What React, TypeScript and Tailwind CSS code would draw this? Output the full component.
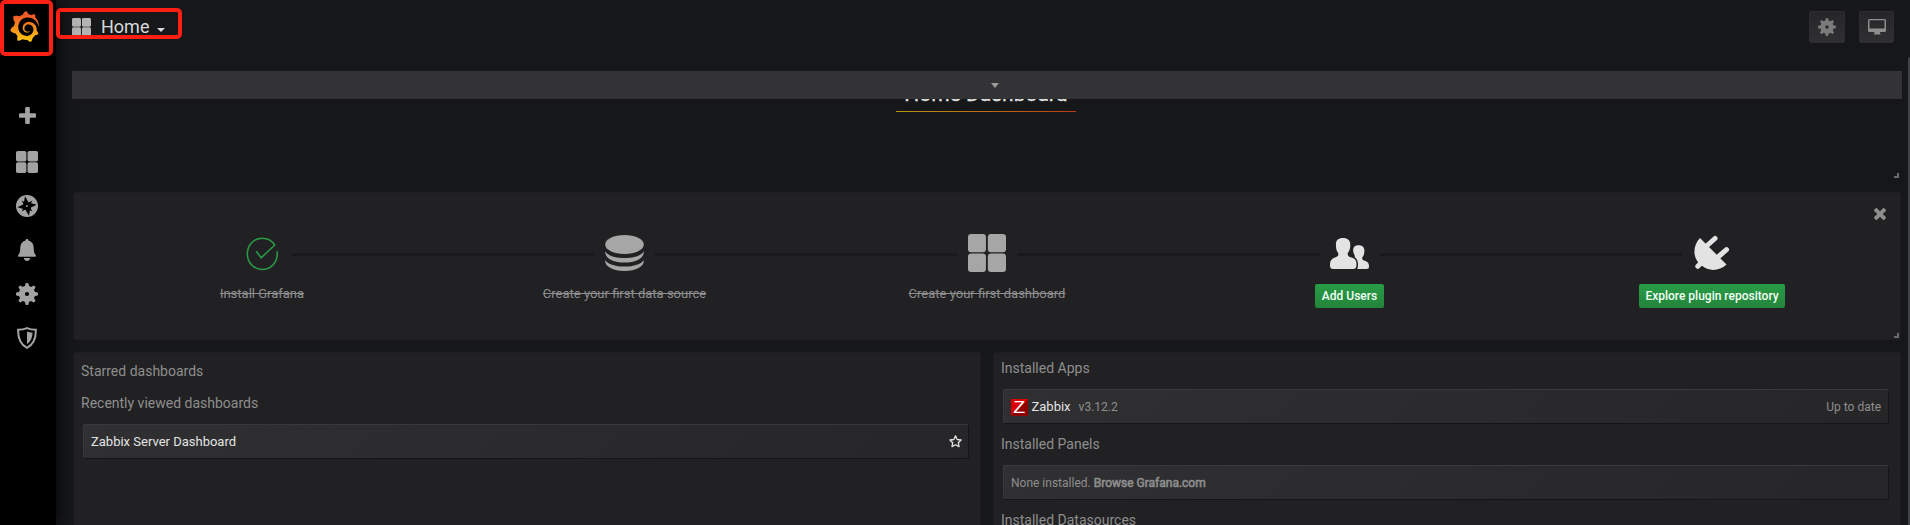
import type { ReactNode } from 'react';
import { SiGrafana } from 'react-icons/si';

type IconProps = { className?: string };

function GridIcon({ className }: IconProps) {
  return (
    <svg viewBox="0 0 36 38" preserveAspectRatio="none" className={className} fill="currentColor">
      <rect x="0" y="0" width="17" height="18.3" rx="3" />
      <rect x="18.8" y="0" width="17.2" height="18.3" rx="3" />
      <rect x="0" y="19.5" width="17" height="18.5" rx="3" />
      <rect x="18.8" y="19.5" width="17.2" height="18.5" rx="3" />
    </svg>
  );
}

function PlusIcon({ className }: IconProps) {
  return (
    <svg viewBox="192 128 1408 1408" className={className} fill="currentColor">
      <path d="M1600 736v192q0 40-28 68t-68 28h-416v416q0 40-28 68t-68 28h-192q-40 0-68-28t-28-68v-416h-416q-40 0-68-28t-28-68v-192q0-40 28-68t68-28h416v-416q0-40 28-68t68-28h192q40 0 68 28t28 68v416h416q40 0 68 28t28 68z" />
    </svg>
  );
}

function CloseIcon({ className }: IconProps) {
  return (
    <svg viewBox="302 366 1188 1188" className={className} fill="currentColor">
      <path d="M1490 1322q0 40-28 68l-136 136q-28 28-68 28t-68-28l-294-294-294 294q-28 28-68 28t-68-28l-136-136q-28-28-28-68t28-68l294-294-294-294q-28-28-28-68t28-68l136-136q28-28 68-28t68 28l294 294 294-294q28-28 68-28t68 28l136 136q28 28 28 68t-28 68l-294 294 294 294q28 28 28 68z" />
    </svg>
  );
}

function CompassIcon({ className }: IconProps) {
  return (
    <svg viewBox="0 0 22 22" className={className}>
      <circle cx="11" cy="11" r="11" fill="currentColor" />
      <path fill="#000" d="M9 1.2L12.600 7.600L20.600 9.800L14.400 12.800L13 20.800L9.200 14.500L1.400 12.200L7.600 9.200Z" />
      <path fill="#000" d="M5.600 5.600L11 8.500L16.400 5.600L13.500 11L16.400 16.400L11 13.500L5.600 16.400L8.500 11Z" />
      <circle cx="11" cy="11" r="0.900" fill="currentColor" />
    </svg>
  );
}

function BellIcon({ className }: IconProps) {
  return (
    <svg viewBox="0 0 18 22" className={className} fill="currentColor">
      <path d="M9 0c.9 0 1.400.6 1.500 1.400C13.800 2.200 15.600 5 15.700 8.400c.1 4.200.5 6 2 7.600.6.800.2 1.800-.8 1.800H1.100c-1 0-1.400-1-.8-1.800 1.500-1.600 1.900-3.400 2-7.600C2.400 5 4.200 2.200 7.500 1.400 7.600.6 8.100 0 9 0Z" />
      <path d="M5.800 19h6.400c-.3 1.800-1.500 2.900-3.200 2.900S6.100 20.800 5.800 19Z" />
    </svg>
  );
}

function GearIcon({ className }: IconProps) {
  return (
    <svg viewBox="0 0 22 22" className={className} fill="currentColor">
      {[0, 45, 90, 135].map((angle) => (
        <path
          key={angle}
          transform={`rotate(${angle} 11 11)`}
          d="M9.600.300Q11-.300 12.400.300L13.200 4H8.800ZM9.600 21.700Q11 22.300 12.400 21.700L13.200 18H8.800Z"
        />
      ))}
      <path fillRule="evenodd" d="M11 2.800a8.200 8.200 0 1 1 0 16.400a8.200 8.200 0 0 1 0-16.400ZM11 8.900a2.100 2.100 0 1 0 0 4.200a2.100 2.100 0 0 0 0-4.200Z" />
    </svg>
  );
}

function ShieldIcon({ className }: IconProps) {
  return (
    <svg viewBox="0 0 20 22" className={className}>
      <path
        d="M10 1.100C7.500 2.300 4.500 2.800 1.100 2.800C1 11 3.500 17.500 10 20.800C16.500 17.500 19 11 18.900 2.800C15.500 2.800 12.500 2.300 10 1.100Z"
        fill="none"
        stroke="currentColor"
        strokeWidth="2"
      />
      <path d="M10 4.500C11.700 5.200 13.500 5.700 15.600 5.800C15.400 10.800 13.600 14.800 10 17.200Z" fill="currentColor" />
    </svg>
  );
}

function MonitorIcon({ className }: IconProps) {
  return (
    <svg viewBox="0 0 18 16" className={className} fill="currentColor">
      <path
        fillRule="evenodd"
        d="M1.500 0h15q1.500 0 1.500 1.500v10q0 1.500-1.500 1.500H12v1q0 .5.6.7v.8H5.900v-.8q.5-.2.500-.7v-1H1.500Q0 13 0 11.500v-10Q0 0 1.500 0ZM1.500 1.200v8.300h15V1.200Z"
      />
    </svg>
  );
}

function CheckIcon({ className }: IconProps) {
  return (
    <svg viewBox="0 0 32 34" preserveAspectRatio="none" className={className} fill="none" stroke="#299c46" strokeWidth="1.500">
      <path d="M30.300 14.200V17C30.300 25.500 24 32.400 15.800 32.400S1.300 25.600 1.300 17C1.300 7.800 7.600 1.200 15.800 1.200C20.800 1.200 25 3.500 27.900 8L14.700 20.800L9.900 14.200" />
    </svg>
  );
}

function DatabaseIcon({ className }: IconProps) {
  return (
    <svg viewBox="0 0 37 35" preserveAspectRatio="none" className={className} fill="currentColor">
      <ellipse cx="18.500" cy="9.300" rx="18.300" ry="9.200" />
      <path d="M.2 15.800C2.500 20 9.500 22.400 18.500 22.400S34.500 20 36.800 15.800C37.500 22 30 26.800 18.500 26.800S-.5 22 .2 15.800Z" />
      <path d="M.2 24.200C2.500 28.300 9.500 30.600 18.500 30.600S34.500 28.300 36.800 24.200C37.500 30.500 30 34.900 18.500 34.900S-.5 30.500 .2 24.200Z" />
    </svg>
  );
}

function UsersIcon({ className }: IconProps) {
  return (
    <svg viewBox="0 0 38 31" preserveAspectRatio="none" className={className} fill="currentColor">
      <path d="M12.700 0C17.300 0 19.900 2.500 19.700 6.500C19.900 10 19 13 17.300 15C17 18 18 18.500 21 19.500C25.500 21 26 23.500 25.800 27.500C25.700 30 24.500 31 22.500 31H3C.8 31 0 29.500 0 27.500C0 23.500.8 21 5 19.500C7.500 18.500 8.500 18 8 15C6.300 13 5.700 10 5.800 6.500C5.600 2.500 8 0 12.700 0Z" />
      <path d="M28 7.200C31.800 7.200 33.600 9.500 33.500 13C33.500 16 32.800 17.800 31.500 19.500C31 21.800 32 22 34.500 22.900C37.500 24 38 26 38 28.500C38 30.300 37.200 31 35.500 31H26.500C27.300 29.800 27.500 26 27 24C26.500 21.500 25.500 20 24 19.300C25 18 23 16.500 22.600 13C22.300 9.500 24 7.200 28 7.200Z" />
    </svg>
  );
}

function PlugIcon({ className }: IconProps) {
  return (
    <svg viewBox="0 0 35 34" className={`overflow-visible ${className}`} fill="currentColor">
      <path d="M6 2L32.500 28.500C25 35.500 14.500 35.500 8 29.800C-1.500 23.500-2 10.500 6 2Z" />
      <path
        d="M12 10.500L21 2.500M24 21L32.500 13.700M7.500 26.500L3.800 30.300"
        stroke="currentColor"
        strokeWidth="5"
        strokeLinecap="round"
      />
    </svg>
  );
}

function StarIcon({ className }: IconProps) {
  return (
    <svg viewBox="0 0 13 13" className={className} fill="none" stroke="currentColor" strokeWidth="1.300">
      <path d="M6.500 .9L8.200 4.500L12.100 5L9.300 7.700L10 11.600L6.500 9.700L3 11.600L3.700 7.700L.9 5L4.800 4.500Z" strokeLinejoin="round" />
    </svg>
  );
}

function CaretDown({ className }: IconProps) {
  return (
    <svg viewBox="0 0 8 4" preserveAspectRatio="none" className={className} fill="currentColor">
      <path d="M0 0H8L4 4Z" />
    </svg>
  );
}

function ResizeHandle({ className }: IconProps) {
  return (
    <svg viewBox="0 0 5 5" className={`absolute size-[5px] ${className}`} fill="#6a6a6c">
      <path d="M3 0H5V5H0V3H3Z" />
    </svg>
  );
}

function Panel({ className, children }: { className: string; children?: ReactNode }) {
  return <section className={`relative rounded-[3px] border border-[#1d1e20] bg-[#212123] ${className}`}>{children}</section>;
}

function Heading({ className, children }: { className: string; children: ReactNode }) {
  return <h2 className={`text-[14px] leading-5 text-[#8e8e8e] ${className}`}>{children}</h2>;
}

function ListRow({ className, children }: { className: string; children: ReactNode }) {
  return (
    <div
      className={`ml-[2px] flex h-[34px] w-[885px] shrink-0 items-center rounded-[2px] border-t border-l border-[#39393b] bg-linear-135 from-[#303032] to-[#262628] px-[7px] shadow-[1px_1px_0_#141516] ${className}`}
    >
      {children}
    </div>
  );
}

function Divider() {
  return <div className="mt-5 h-[3px] w-[302.500px] shrink-0 bg-[#18191b]" />;
}

function Step({ icon, children }: { icon: ReactNode; children: ReactNode }) {
  return (
    <div className="flex w-[60px] shrink-0 flex-col items-center">
      <div className="flex h-10 shrink-0 items-center justify-center">{icon}</div>
      {children}
    </div>
  );
}

function DoneLabel({ children }: { children: ReactNode }) {
  return <span className="mt-[11px] text-[13px] leading-5 whitespace-nowrap text-[#8e8e8e] line-through">{children}</span>;
}

function ActionButton({ className, children }: { className: string; children: ReactNode }) {
  return (
    <button
      className={`mt-[11px] h-6 rounded-[2px] bg-linear-to-b from-[#299c46] to-[#23843b] pt-px text-[12px] leading-[23px] font-medium whitespace-nowrap text-[#f2fff5] ${className}`}
    >
      {children}
    </button>
  );
}

function Sidebar() {
  return (
    <nav className="relative z-10 flex w-14 shrink-0 flex-col items-center bg-black pr-[2px] text-[#a3a3a3] shadow-[0_0_18px_#000]">
      <svg className="absolute size-0">
        <defs>
          <linearGradient id="logo" x1="0" y1="0" x2="0" y2="1">
            <stop offset="0.150" stopColor="#f05a28" />
            <stop offset="1" stopColor="#fbca0a" />
          </linearGradient>
        </defs>
      </svg>
      <SiGrafana className="mt-[11px] mr-[6px] size-[31px] fill-[url(#logo)]" />
      <PlusIcon className="mt-[65px] size-[17px]" />
      <GridIcon className="mt-[27px] size-[22px]" />
      <CompassIcon className="mt-[22px] size-[22px]" />
      <BellIcon className="mt-[22px] h-[22px] w-[18px]" />
      <GearIcon className="mt-[22px] size-[22px]" />
      <ShieldIcon className="mt-[22px] h-[22px] w-5" />
    </nav>
  );
}

function TopBar() {
  return (
    <header className="flex h-[55px] shrink-0 items-start pr-4 pl-4">
      <div className="mt-4 flex h-[22px] items-center text-[#d8d9da]">
        <GridIcon className="-mt-px h-[18px] w-[19px] text-[#b3b3b3]" />
        <span className="ml-[10px] text-[18px] leading-[22px]">Home</span>
        <CaretDown className="mt-[5px] ml-2 h-[4px] w-2" />
      </div>
      <div className="mt-[11px] ml-auto flex gap-[14px]">
        <button className="flex h-8 w-9 items-center justify-center rounded-[2px] border border-[#2e2e30] bg-linear-to-b from-[#262628] to-[#303032]">
          <GearIcon className="size-[18px] text-[#7b7b7c]" />
        </button>
        <button className="flex h-8 w-[35px] items-center justify-center rounded-[2px] border border-[#2e2e30] bg-linear-to-b from-[#262628] to-[#303032]">
          <MonitorIcon className="h-4 w-[18px] text-[#8e8e8e]" />
        </button>
      </div>
    </header>
  );
}

function GettingStarted() {
  return (
    <Panel className="mt-3 h-[148px] shrink-0">
      <CloseIcon className="absolute top-[15px] right-[14px] size-3 text-[#8e8e8e]" />
      <div className="flex pt-10 pl-[158px]">
        <Step icon={<CheckIcon className="mt-px h-[34px] w-[33px]" />}>
          <DoneLabel>Install Grafana</DoneLabel>
        </Step>
        <Divider />
        <Step icon={<DatabaseIcon className="h-[36px] w-[39px] text-[#a6a6a6]" />}>
          <DoneLabel>Create your first data source</DoneLabel>
        </Step>
        <Divider />
        <Step icon={<GridIcon className="h-[38px] w-[38px] text-[#a6a6a6]" />}>
          <DoneLabel>Create your first dashboard</DoneLabel>
        </Step>
        <Divider />
        <Step icon={<UsersIcon className="h-[31px] w-[39px] text-[#e3e3e3]" />}>
          <ActionButton className="px-[7px]">Add Users</ActionButton>
        </Step>
        <Divider />
        <Step icon={<PlugIcon className="mr-[2px] h-[34px] w-[35px] text-[#e3e3e3]" />}>
          <ActionButton className="px-[6px]">Explore plugin repository</ActionButton>
        </Step>
      </div>
      <ResizeHandle className="right-px bottom-px" />
    </Panel>
  );
}

function DashboardLists() {
  return (
    <Panel className="h-[220px] w-[908px] shrink-0 pt-2 pl-[7px]">
      <Heading className="">Starred dashboards</Heading>
      <Heading className="mt-3">Recently viewed dashboards</Heading>
      <ListRow className="mt-[11px] justify-between text-[13px] text-[#e3e3e3]">
        <span>Zabbix Server Dashboard</span>
        <StarIcon className="-mr-px size-[13px]" />
      </ListRow>
    </Panel>
  );
}

function PluginList() {
  return (
    <Panel className="h-[220px] w-[908px] shrink-0 pt-[5px] pl-[7px]">
      <Heading className="">Installed Apps</Heading>
      <ListRow className="mt-[11px] text-[12px]">
        <span className="mt-px flex size-[17px] items-center justify-center bg-linear-135 from-[#dd0000] from-50% to-[#8f0000] to-50% font-['Liberation_Sans',sans-serif] text-[17px] leading-[17px] text-white">
          <span className="scale-x-115">Z</span>
        </span>
        <span className="ml-[3.500px] text-[13px] text-[#e3e3e3]">Zabbix</span>
        <span className="ml-2">v3.12.2</span>
        <span className="ml-auto">Up to date</span>
      </ListRow>
      <Heading className="mt-[11px]">Installed Panels</Heading>
      <ListRow className="mt-[11px] text-[12px]">
        <span>None installed.</span>
        <span className="ml-[3px] [-webkit-text-stroke:0.6px_#8e8e8e]">Browse Grafana.com</span>
      </ListRow>
      <Heading className="mt-[11px]">Installed Datasources</Heading>
    </Panel>
  );
}

export default function App() {
  return (
    <div className="relative flex h-[525px] w-[1910px] overflow-hidden bg-[#161719] font-[Roboto,sans-serif] text-[#8e8e8e]">
      <Sidebar />
      <div className="flex min-w-0 grow flex-col">
        <TopBar />
        <main className="relative flex grow flex-col pr-[9px] pl-[17px]">
          <div className="absolute top-4 left-4 z-10 flex h-7 w-[1830px] items-center justify-center bg-[#333335]">
            <CaretDown className="-mr-4 h-[5px] w-[8px] text-[#9b9b9b]" />
          </div>
          <div className="relative flex h-[125px] shrink-0 justify-center pr-[2px]">
            <h1 className="mt-[25px] h-8 w-[180px] bg-linear-to-r from-[#b8950f] to-[#b83a18] bg-[length:100%_1px] bg-bottom bg-no-repeat text-center text-[21px] leading-[28px] text-[#e3e3e3] [-webkit-text-stroke:0.3px_#e3e3e3]">
              Home Dashboard
            </h1>
            <ResizeHandle className="right-[2px] bottom-[2px]" />
          </div>
          <GettingStarted />
          <div className="mt-3 flex gap-3">
            <DashboardLists />
            <PluginList />
          </div>
        </main>
      </div>
      <div className="absolute top-[57px] right-0 bottom-0 w-[2px] rounded-tl bg-[#43434f]" />
      <div className="absolute top-0 left-0 z-20 h-[56px] w-[53px] rounded-[5px] border-4 border-[#fc1f14]" />
      <div className="absolute top-2 left-14 z-20 h-[31px] w-[126px] rounded-[5px] border-4 border-[#fc1f14]" />
    </div>
  );
}
